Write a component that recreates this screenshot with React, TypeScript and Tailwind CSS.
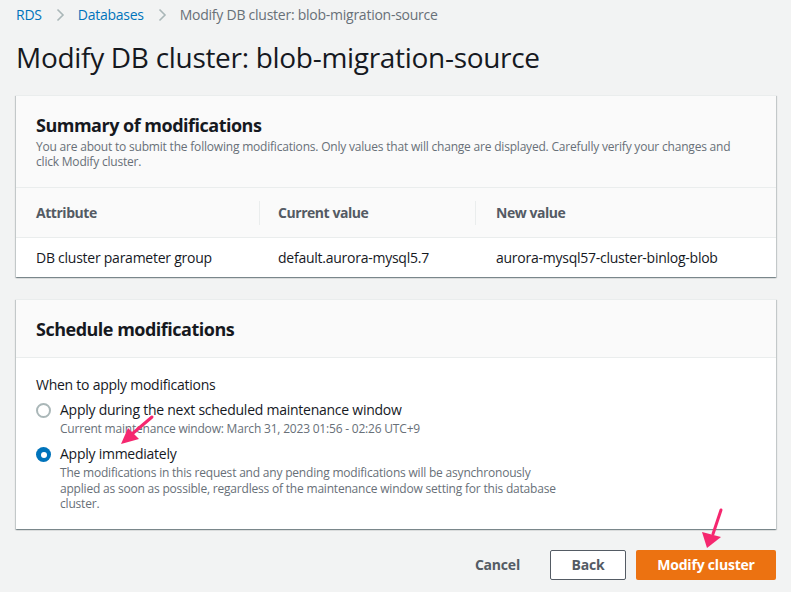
import React from 'react';

const FONT = { fontFamily: '"Open Sans", "Noto Sans", Arial, sans-serif' };

function Chevron() {
  return (
    <svg width="16" height="16" viewBox="0 0 16 16" className="mx-[10px]">
      <path d="M5.5 2.5 L11 8 L5.5 13.5" fill="none" stroke="#aab7b8" strokeWidth="1.6" />
    </svg>
  );
}

function Radio({ checked }: { checked?: boolean }) {
  return checked ? (
    <span className="flex h-[15px] w-[15px] shrink-0 items-center justify-center rounded-full bg-[#0073bb]">
      <span className="block h-[6px] w-[6px] rounded-full bg-white" />
    </span>
  ) : (
    <span className="block h-[15px] w-[15px] shrink-0 rounded-full border-2 border-[#aab7b8] bg-white" />
  );
}

export default function App() {
  return (
    <div style={FONT} className="relative min-h-screen bg-[#f2f3f3] pl-4 pr-[15px] text-[#16191f] tracking-[-0.25px]">
      {/* Breadcrumb */}
      <div className="flex h-[20px] items-center pt-[10px] text-[14px] leading-[20px]">
        <span className="text-[#0073bb]">RDS</span>
        <Chevron />
        <span className="text-[#0073bb]">Databases</span>
        <Chevron />
        <span className="text-[#687078]">Modify DB cluster: blob-migration-source</span>
      </div>

      <h1 className="mt-[19px] text-[28px] leading-[36px] font-normal tracking-[-0.3px]">Modify DB cluster: blob-migration-source</h1>

      {/* Summary card */}
      <div className="mt-[20px] border-t border-[#eaeded] bg-white shadow-[0_1px_1px_0_rgba(0,28,36,0.3),1px_1px_1px_0_rgba(0,28,36,0.15),-1px_1px_1px_0_rgba(0,28,36,0.15)]">
        <div className="bg-[#fafafa] px-5 pt-[17px] pb-[18px]">
          <h2 className="text-[18px] leading-[24px] font-bold tracking-[-0.5px]">Summary of modifications</h2>
          <p className="mt-[2px] text-[12px] leading-[15px] tracking-[-0.2px] text-[#687078]">
            You are about to submit the following modifications. Only values that will change are displayed. Carefully verify your changes and click Modify cluster.
          </p>
        </div>
        <div className="flex h-[50px] items-center border-t border-[#eaeded] bg-[#fafafa] text-[14px] font-bold tracking-[-0.45px] text-[#545b64]">
          <div className="w-[243px] pl-5">Attribute</div>
          <div className="flex h-[24px] w-[216px] items-center border-l border-[#eaeded] pl-[18px]">Current value</div>
          <div className="flex h-[24px] flex-1 items-center border-l border-[#eaeded] pl-5">New value</div>
        </div>
        <div className="flex h-[40px] items-center border-t border-[#eaeded] text-[14px]">
          <div className="w-[243px] pl-5">DB cluster parameter group</div>
          <div className="w-[216px] pl-[19px]">default.aurora-mysql5.7</div>
          <div className="flex-1 pl-[21px]">aurora-mysql57-cluster-binlog-blob</div>
        </div>
      </div>

      {/* Schedule card */}
      <div className="mt-[22px] border-t border-[#eaeded] bg-white shadow-[0_1px_1px_0_rgba(0,28,36,0.3),1px_1px_1px_0_rgba(0,28,36,0.15),-1px_1px_1px_0_rgba(0,28,36,0.15)]">
        <div className="flex h-[58px] items-center border-b border-[#eaeded] bg-[#fafafa] px-5">
          <h2 className="text-[18px] leading-[24px] font-bold tracking-[-0.5px]">Schedule modifications</h2>
        </div>
        <div className="px-5 pt-[17px] pb-[17px]">
          <div className="text-[14px] leading-[20px]">When to apply modifications</div>
          <div className="mt-[5px] flex gap-[9px]">
            <div className="pt-[3px]"><Radio /></div>
            <div>
              <div className="text-[14px] leading-[20px]">Apply during the next scheduled maintenance window</div>
              <div className="mt-[1px] text-[12px] leading-[16px] tracking-[-0.2px] text-[#687078]">Current maintenance window: March 31, 2023 01:56 - 02:26 UTC+9</div>
            </div>
          </div>
          <div className="mt-[7px] flex gap-[9px]">
            <div className="pt-[3px]"><Radio checked /></div>
            <div>
              <div className="text-[14px] leading-[20px]">Apply immediately</div>
              <div className="mt-[1px] w-[505px] text-[12px] leading-[15.5px] tracking-[-0.2px] text-[#687078]">
                The modifications in this request and any pending modifications will be asynchronously applied as soon as possible, regardless of the maintenance window setting for this database cluster.
              </div>
            </div>
          </div>
        </div>
      </div>

      {/* Actions */}
      <div className="mt-[21px] flex items-center justify-end">
        <button className="mr-[30px] text-[14px] font-bold tracking-[-0.2px] text-[#545b64]">Cancel</button>
        <button className="mr-[10px] h-[30px] w-[76px] rounded-[2px] border border-[#545b64] bg-white text-[14px] font-bold tracking-[-0.2px] text-[#545b64]">Back</button>
        <button className="h-[30px] w-[140px] rounded-[2px] bg-[#ec7211] text-[14px] font-bold tracking-[-0.2px] text-white">Modify cluster</button>
      </div>

      {/* Annotation arrows */}
      <svg className="pointer-events-none absolute left-0 top-0" width="791" height="592">
        <line x1="152" y1="417" x2="132" y2="434" stroke="#f5276f" strokeWidth="3" strokeLinecap="round" />
        <polygon points="121,444 128,428 139,439" fill="#f5276f" />
        <line x1="721" y1="510" x2="713" y2="534" stroke="#f5276f" strokeWidth="3" strokeLinecap="round" />
        <polygon points="707,548 702,532 721,537" fill="#f5276f" />
      </svg>
    </div>
  );
}
